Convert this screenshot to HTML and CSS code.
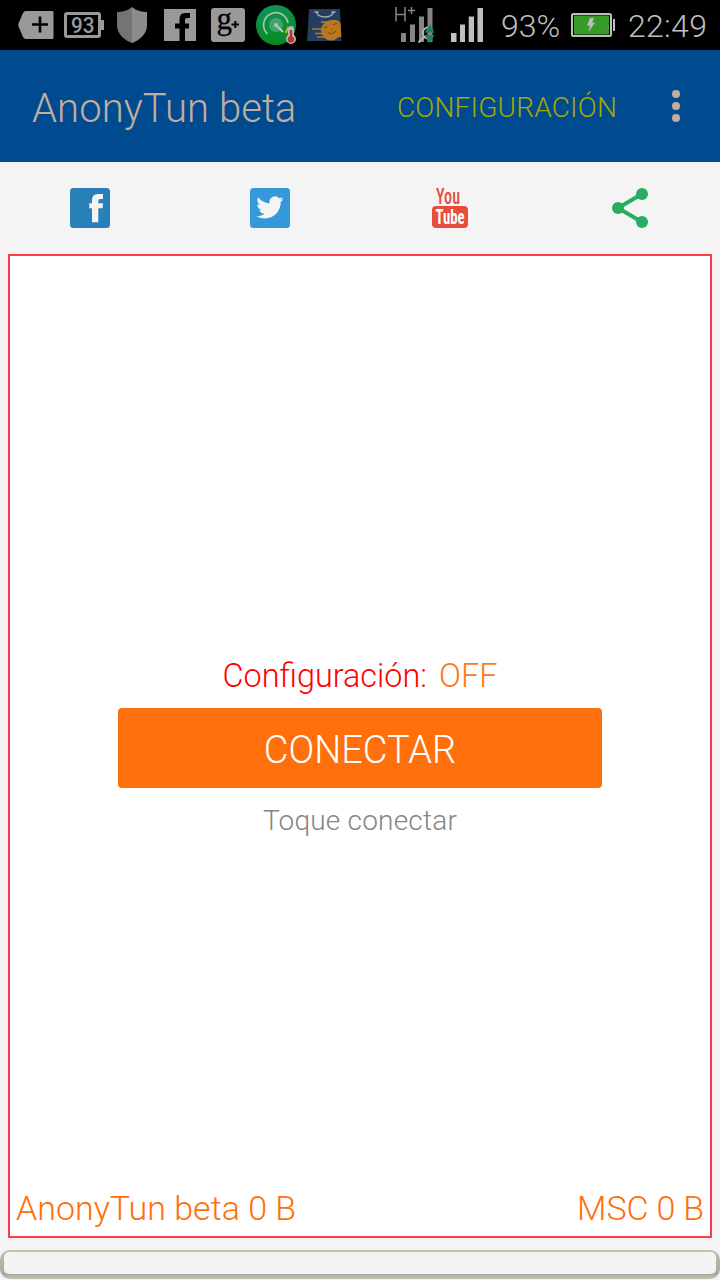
FILE: index.html
```html
<!DOCTYPE html>
<html lang="es">
<head>
<meta charset="utf-8">
<title>AnonyTun beta</title>
<link rel="stylesheet" href="styles.css">
</head>
<body>
<div class="screen">
  <div class="status-bar">
    <div class="notifications">
      <svg class="notice" viewBox="0 0 48 50"><path d="M14 11H40Q41.500 11 41.500 12.500V37.500Q41.500 39 40 39H14Q12 39 11 37L6.500 26.500Q6 25 6.500 23.500L11 13Q12 11 14 11Z" fill="#999"/><path d="M20 24.500H36M28 16.500V32.500" stroke="#000" stroke-width="2.600"/></svg>
      <svg class="notice" viewBox="0 0 48 50"><rect x="5.500" y="13.500" width="34" height="23" rx="1.500" fill="none" stroke="#999" stroke-width="3"/><path d="M40 20H44V30H40Z" fill="#999"/><text class="battery-count" x="11" y="32.500" textLength="23.500" lengthAdjust="spacingAndGlyphs">93</text></svg>
      <svg class="notice" viewBox="0 0 48 50"><path d="M24 7C20 11 13 12 9 12V25C9 34 16 40 24 43Z" fill="#747474"/><path d="M24 7C28 11 35 12 39 12V25C39 34 32 40 24 43Z" fill="#8c8c8c"/></svg>
      <svg class="notice" viewBox="0 0 48 50"><path d="M8 9H40V41H29V28.500H33V23.500H29V20Q29 18 31 18H34V13H29Q23.500 13 23.500 19V23.500H19V28.500H23.500V41H8Z" fill="#999"/></svg>
      <svg class="notice" viewBox="0 0 48 50"><rect x="7" y="8" width="34" height="34" rx="3" fill="#999"/><text class="google-mark" x="12.500" y="29">g</text><path d="M27.500 24.500H35M31.300 21V28" stroke="#000" stroke-width="2"/></svg>
      <svg class="notice" viewBox="0 0 48 50"><defs><linearGradient id="dial" x1="0" y1="0" x2="0.200" y2="1"><stop offset="0" stop-color="#12925b"/><stop offset="1" stop-color="#078b22"/></linearGradient></defs><circle cx="24" cy="25" r="20" fill="url(#dial)"/><circle cx="24" cy="25" r="7" fill="#42a56e"/><path d="M15.500 34A12.300 12.300 0 1 1 36 23" fill="none" stroke="#a2c5ad" stroke-width="1.700"/><path d="M24 25L31 32" stroke="#b4cdbb" stroke-width="2.200"/><circle cx="24" cy="25" r="2" fill="#a8cab3"/><path d="M36.500 27L33.500 33" stroke="#b5b620" stroke-width="2.300"/><path d="M36 29Q36 26 39 26Q42 26 42 29V35A5 5 0 1 1 36 35Z" fill="#b9b9b9"/><path d="M39 30V39" stroke="#b43a30" stroke-width="2.500"/><circle cx="39" cy="39.500" r="3.300" fill="#b43a30"/></svg>
      <svg class="notice" viewBox="0 0 48 50"><path d="M9 9H40L41.500 41H7Z" fill="#243e61"/><path d="M16.500 12Q18 17 25 17Q32 17 33.500 12" fill="none" stroke="#a8aeb5" stroke-width="1.300"/><path d="M14.500 12H18.500M31.500 12H35.500" stroke="#a8aeb5" stroke-width="1.300"/><path d="M31 20A10.500 10.500 0 0 0 24 37H41.300L40.600 23Q37 18.500 31 20Z" fill="#b9781e"/><circle cx="31" cy="30.500" r="10" fill="#b9781e"/><path d="M21 22H31M12 29H23M15 33.500H23M17 37H27" stroke="#b9781e" stroke-width="1.300"/><path d="M24 28L27 27M33 25L37 23M28 33Q33 35 36 31M31 29L32 30" fill="none" stroke="#59401f" stroke-width="0.900"/></svg>
    </div>
    <div class="system">
      <svg class="network" viewBox="390 0 50 50"><g fill="#858585"><path d="M401 33H406V42H401ZM410 24.500H415V42H410ZM419 16.500H424V42H419ZM427.500 8H432.500V42H427.500Z"/></g><path d="M396 7V21.500M405 7V21.500M396 14.500H405M408 10.500H415M411.500 7V14" fill="none" stroke="#858585" stroke-width="1.500"/><path d="M418.500 42.500L425 36M432 29A5.500 5.500 0 1 0 432 37" fill="none" stroke="#b4b4b4" stroke-width="2"/><path d="M424.500 32.500L430 24.500L434.500 32.500ZM424.500 35L430 43L434.500 35Z" fill="#19846b"/></svg>
      <svg class="signal" viewBox="450 0 35 50"><path d="M451 33H456.500V42H451ZM460 24.500H465V42H460ZM468.700 16.500H474V42H468.700ZM477.500 8H483V42H477.500Z" fill="#bfbfbf"/></svg>
      <span class="percent">93%</span>
      <svg class="battery" viewBox="571 0 44 50"><rect x="572" y="14" width="39" height="22" rx="1.500" fill="#000" stroke="#bfbfbf" stroke-width="2"/><path d="M574 15.500H609V34.500H574Z" fill="#389b28"/><path d="M613 19H615V31H613Z" fill="#bfbfbf"/><path d="M590 18H594L592 22.500H595L588.500 32L590 25.500H587Z" fill="#bfbfbf"/></svg>
      <span class="clock">22:49</span>
    </div>
  </div>

  <header class="app-bar">
    <h1 class="app-title">AnonyTun beta</h1>
    <span class="settings">CONFIGURACIÓN</span>
    <svg class="overflow" viewBox="0 0 8 32"><circle cx="4" cy="4" r="4"/><circle cx="4" cy="16" r="4"/><circle cx="4" cy="28" r="4"/></svg>
  </header>

  <nav class="social">
    <svg class="social-icon" viewBox="0 0 40 40"><rect width="40" height="40" rx="3.500" fill="#2980b9"/><path d="M22 34.200V20.300H19.300V15.300H22V12Q22 6 28 6H33V11H30Q28.300 11 28.300 13V15.300H33L32.500 20.300H28.300V34.200Z" fill="#f4f4f4"/></svg>
    <svg class="social-icon" viewBox="0 0 40 40"><rect width="40" height="40" rx="3.500" fill="#3498db"/><path transform="translate(6.200 5.800) scale(1.140)" d="M24 4.600a10 10 0 0 1-2.800.8 5 5 0 0 0 2.100-2.700c-1 .6-2 1-3.100 1.200a4.900 4.900 0 0 0-8.400 4.500A14 14 0 0 1 1.700 3.100a4.900 4.900 0 0 0 1.500 6.600A4.900 4.900 0 0 1 1 9.100a4.900 4.900 0 0 0 3.900 4.900 5 5 0 0 1-2.200.1 4.900 4.900 0 0 0 4.600 3.400A9.900 9.900 0 0 1 0 19.500a14 14 0 0 0 7.500 2.200c9.100 0 14-7.500 14-14v-.6A10 10 0 0 0 24 4.600z" fill="#f4f4f4"/></svg>
    <svg class="social-icon" viewBox="0 0 40 40"><text class="tube-top" x="6" y="15.800" textLength="24" lengthAdjust="spacingAndGlyphs">You</text><rect x="2" y="18" width="36" height="22" rx="4" fill="#e74c3c"/><text class="tube-bottom" x="5.500" y="36" textLength="29" lengthAdjust="spacingAndGlyphs">Tube</text></svg>
    <svg class="social-icon" viewBox="0 0 40 40"><path d="M32 6L8 20L32 34" fill="none" stroke="#27ae60" stroke-width="4"/><g fill="#27ae60"><circle cx="32" cy="6" r="6"/><circle cx="8" cy="20" r="6"/><circle cx="32" cy="34" r="6"/></g></svg>
  </nav>

  <main class="panel">
    <div class="connection">
      <p class="config"><span>Configuración:</span><span class="config-value">OFF</span></p>
      <button class="connect">CONECTAR</button>
      <p class="hint">Toque conectar</p>
    </div>
    <div class="traffic"><span class="received">AnonyTun beta 0 B</span><span class="sent">MSC 0 B</span></div>
  </main>
  <div class="ad-slot"><div class="ad-content"></div></div>
</div>
</body>
</html>
```

FILE: styles.css
```css
* { box-sizing: border-box; }
body { margin: 0; background: #f4f4f4; }
h1, p { margin: 0; font-weight: 300; }
svg { display: block; flex: none; }
.screen {
  width: 720px; height: 1280px; overflow: hidden;
  display: flex; flex-direction: column;
  font-family: Roboto, sans-serif; font-weight: 300;
  white-space: nowrap;
}
.status-bar {
  height: 50px; flex: none; background: #000; color: #bfbfbf;
  display: flex; justify-content: space-between;
  padding: 0 12px; font-size: 32px; line-height: 52px;
}
.notifications, .system { display: flex; }
.notice { width: 48px; height: 50px; }
.battery-count { font-size: 22px; font-weight: 500; fill: #999; }
.google-mark { font: 400 31px "Liberation Serif", serif; fill: #000; stroke: #000; stroke-width: 0.3px; }
.network { width: 50px; height: 50px; margin-right: 10px; }
.signal { width: 35px; height: 50px; margin-right: 16px; }
.percent { width: 60px; margin-right: 10px; }
.battery { width: 44px; height: 50px; margin-right: 13px; }
.clock { width: 80px; letter-spacing: 0.3px; }
.app-bar {
  height: 112px; flex: none; background: #004b8f;
  display: flex; align-items: center; padding: 0 40px 0 32px;
}
.app-title { font-size: 40px; line-height: 48px; letter-spacing: 0.08px; color: #c1ae9d; margin-top: 6px; }
.settings { margin-left: auto; margin-top: 4px; font-size: 28px; line-height: 36px; letter-spacing: 0.2px; color: #a6a800; }
.overflow { width: 8px; height: 32px; margin-left: 55px; fill: #c1ae9d; }
.social {
  height: 92px; flex: none;
  display: grid; grid-template-columns: repeat(4, 1fr);
  align-items: center; justify-items: center;
}
.social-icon { width: 40px; height: 40px; overflow: visible; }
.tube-top, .tube-bottom { font-family: "Roboto Condensed", Roboto, sans-serif; font-weight: 500; }
.tube-top { font-size: 22px; fill: #e74c3c; }
.tube-bottom { font-size: 21px; font-weight: 700; fill: #fff; }
.panel {
  height: 984px; flex: none; margin: 0 8px; padding: 400px 6px 0;
  border: 2px solid #ff3b47; background: #fff;
  display: flex; flex-direction: column;
}
.connection { display: flex; flex-direction: column; align-items: center; }
.config { display: flex; gap: 12px; font-size: 32.4px; line-height: 40px; margin-bottom: 12px; color: #f00; }
.config-value { color: #ff7916; }
.connect {
  width: 484px; height: 80px; border: 0; border-radius: 4px; padding: 4px 0 0;
  background: #ff6f0b; color: #fff;
  font: 300 38px/46px Roboto, sans-serif;
}
.hint { font-size: 28px; line-height: 36px; letter-spacing: 0.2px; margin-top: 15px; color: #858585; }
.traffic {
  margin-top: auto; display: flex; justify-content: space-between;
  font-size: 34px; line-height: 42px; color: #ff6f0b; padding-bottom: 7px;
}
.sent { letter-spacing: -0.15px; }
.ad-slot {
  height: 29px; flex: none; margin: 12px 0 0; padding: 2px 4px 5px;
  border-radius: 10px;
  background: linear-gradient(#c3c3ac, #b8b8a5 20%, #a9aba3 83%, #c4c4b0);
}
.ad-content { height: 22px; border-radius: 5px; background: #f3f3f3; }
```
